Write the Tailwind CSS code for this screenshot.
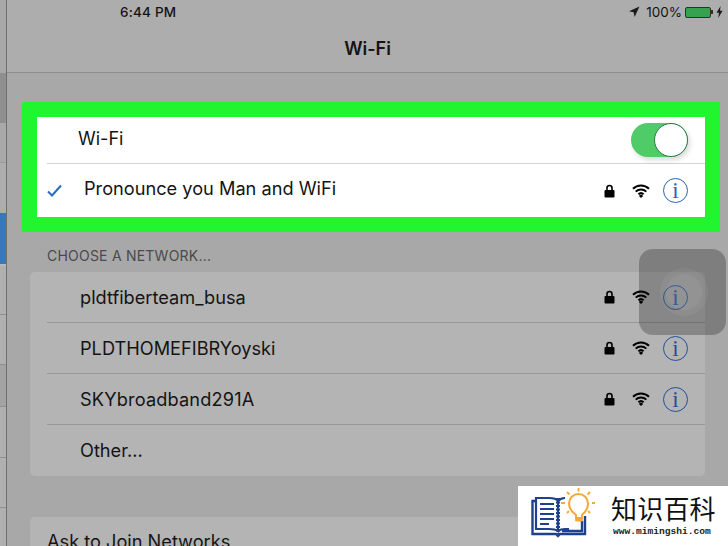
<!DOCTYPE html>
<html>
<head>
<meta charset="utf-8">
<script src="https://cdn.jsdelivr.net/npm/@tailwindcss/browser@4"></script>
</head>
<body class="m-0">
<div class="relative flex w-[728px] h-[546px] overflow-hidden bg-[#a8a8a9] font-['Inter','Liberation_Sans',sans-serif] text-[#141414]">
  <!-- sidebar sliver -->
  <div class="flex flex-col w-[7px] shrink-0 border-r border-[#6f6f6f] bg-[#b0b0b0]">
    <div class="h-[73px] bg-[#a8a8a8]"></div>
    <div class="h-[50px] bg-[#8f8f8f]"></div>
    <div class="h-[40px] bg-[#a9a9a9] border-b border-[#9c9c9c]"></div>
    <div class="h-[50px] bg-[#adadad]"></div>
    <div class="h-[51px] bg-[#3a76bd]"></div>
    <div class="h-[51px] border-t-2 border-[#b9b9b9] border-b border-b-[#8f8f8f]"></div>
    <div class="h-[50px] border-b border-[#8f8f8f]"></div>
    <div class="h-[42px] bg-[#a3a3a3] border-b border-[#8f8f8f]"></div>
    <div class="h-[51px] border-b border-[#8f8f8f]"></div>
    <div class="h-[50px] border-b border-[#8f8f8f]"></div>
  </div>

  <div class="flex-1 flex flex-col min-w-0">
    <!-- header -->
    <div class="h-[73px] shrink-0 bg-[#adadad] border-b border-[#8d8d8d] flex flex-col">
      <div class="h-[24px] flex items-center justify-between pl-[113px] pr-[5px]">
        <span class="text-[13.5px] font-medium tracking-[0.2px]">6:44 PM</span>
        <div class="flex items-center">
          <svg width="12" height="12" viewBox="0 0 12 12" class="mr-[6px]"><path d="M11.5 .5 L1 5.2 L5.6 6.2 L6.6 11 Z" fill="#1a1a1a"/></svg>
          <span class="text-[13.5px] mr-[3px]">100%</span>
          <div class="w-[26px] h-[11px] border border-[#2f2f2f] bg-[#35a24f] rounded-[2px]"></div>
          <div class="w-[2px] h-[4px] bg-[#333] mr-[3px]"></div>
          <svg width="7" height="12" viewBox="0 0 7 12"><path d="M4.6 0 L0.5 6.8 H3 L2.2 12 L6.6 4.8 H4 Z" fill="#1a1a1a"/></svg>
        </div>
      </div>
      <div class="h-[48px] flex items-center justify-center">
        <span class="text-[18px] font-semibold">Wi-Fi</span>
      </div>
    </div>

    <!-- highlighted group -->
    <div class="shrink-0 mt-[29px] ml-[15px] mr-[8px] border-[15px] border-[#21f52f] bg-white">
      <div class="h-[46px] flex items-center justify-between pl-[41px] pr-[17px]">
        <span class="text-[18px] mb-[3px]">Wi-Fi</span>
        <div class="relative w-[57px] h-[34px] mb-[1px] rounded-full bg-[#4fcb68] shadow-[2px_3px_5px_rgba(0,0,0,0.15)]">
          <div class="absolute right-0 top-0 w-[34px] h-[34px] rounded-full bg-white border border-[#2f7a45]"></div>
        </div>
      </div>
      <div class="ml-[10px] h-[1px] bg-[#d4d4d4]"></div>
      <div class="h-[53px] flex items-center pl-[10px] pr-[17px]">
        <svg width="15" height="13" viewBox="0 0 15 13"><path d="M1 7.5 L5 11.5 L14 1.5" fill="none" stroke="#2a6cc0" stroke-width="2"/></svg>
        <span class="ml-[22px] text-[18.2px] mb-[3px] flex-1">Pronounce you Man and WiFi</span>
        <svg width="11" height="14" viewBox="0 0 11 14"><path d="M3 6.5 V4 a2.5 2.5 0 0 1 5 0 V6.5" fill="none" stroke="#000" stroke-width="1.6"/><rect x="0.5" y="6" width="10" height="7.5" rx="1" fill="#000"/></svg>
        <svg class="ml-[17px]" width="18" height="14" viewBox="0 0 18 14"><path d="M1 4.8 a11.5 11.5 0 0 1 16 0 M3.7 7.6 a7.6 7.6 0 0 1 10.6 0 M6.4 10.3 a3.8 3.8 0 0 1 5.2 0" fill="none" stroke="#000" stroke-width="2"/><path d="M9 14 L6.9 11.9 a3 3 0 0 1 4.2 0 Z" fill="#000"/></svg>
        <div class="ml-[13px] w-[25px] h-[25px] rounded-full border-[1.4px] border-[#2a62b8] flex items-center justify-center font-['Liberation_Serif',serif] text-[23px] leading-none text-[#2a62b8]">i</div>
      </div>
    </div>

    <div class="shrink-0 h-[40px] pl-[40px] flex items-end pb-[6px] text-[14px] tracking-[0.22px] text-[#4a4a4a]">CHOOSE A NETWORK...</div>

    <!-- networks -->
    <div class="shrink-0 ml-[23px] mr-[23px] bg-[#b4b4b4] rounded-[5px] h-[204px] flex flex-col">
      <div class="h-[51px] ml-[17px] pl-[33px] pr-[17px] flex items-center border-b border-[#989898]">
        <span class="text-[18.2px] flex-1 mt-[1px]">pldtfiberteam_busa</span>
        <svg width="11" height="14" viewBox="0 0 11 14"><path d="M3 6.5 V4 a2.5 2.5 0 0 1 5 0 V6.5" fill="none" stroke="#000" stroke-width="1.6"/><rect x="0.5" y="6" width="10" height="7.5" rx="1" fill="#000"/></svg>
        <svg class="ml-[17px]" width="18" height="14" viewBox="0 0 18 14"><path d="M1 4.8 a11.5 11.5 0 0 1 16 0 M3.7 7.6 a7.6 7.6 0 0 1 10.6 0 M6.4 10.3 a3.8 3.8 0 0 1 5.2 0" fill="none" stroke="#000" stroke-width="2"/><path d="M9 14 L6.9 11.9 a3 3 0 0 1 4.2 0 Z" fill="#000"/></svg>
        <div class="ml-[13px] w-[25px] h-[25px] rounded-full border-[1.4px] border-[#2a62b8] flex items-center justify-center font-['Liberation_Serif',serif] text-[23px] leading-none text-[#2a62b8]">i</div>
      </div>
      <div class="h-[51px] ml-[17px] pl-[33px] pr-[17px] flex items-center border-b border-[#989898]">
        <span class="text-[18.2px] flex-1 mt-[1px]">PLDTHOMEFIBRYoyski</span>
        <svg width="11" height="14" viewBox="0 0 11 14"><path d="M3 6.5 V4 a2.5 2.5 0 0 1 5 0 V6.5" fill="none" stroke="#000" stroke-width="1.6"/><rect x="0.5" y="6" width="10" height="7.5" rx="1" fill="#000"/></svg>
        <svg class="ml-[17px]" width="18" height="14" viewBox="0 0 18 14"><path d="M1 4.8 a11.5 11.5 0 0 1 16 0 M3.7 7.6 a7.6 7.6 0 0 1 10.6 0 M6.4 10.3 a3.8 3.8 0 0 1 5.2 0" fill="none" stroke="#000" stroke-width="2"/><path d="M9 14 L6.9 11.9 a3 3 0 0 1 4.2 0 Z" fill="#000"/></svg>
        <div class="ml-[13px] w-[25px] h-[25px] rounded-full border-[1.4px] border-[#1f4f9c] flex items-center justify-center font-['Liberation_Serif',serif] text-[23px] leading-none text-[#1f4f9c]">i</div>
      </div>
      <div class="h-[51px] ml-[17px] pl-[33px] pr-[17px] flex items-center border-b border-[#989898]">
        <span class="text-[18.2px] tracking-[0.15px] flex-1 mt-[1px]">SKYbroadband291A</span>
        <svg width="11" height="14" viewBox="0 0 11 14"><path d="M3 6.5 V4 a2.5 2.5 0 0 1 5 0 V6.5" fill="none" stroke="#000" stroke-width="1.6"/><rect x="0.5" y="6" width="10" height="7.5" rx="1" fill="#000"/></svg>
        <svg class="ml-[17px]" width="18" height="14" viewBox="0 0 18 14"><path d="M1 4.8 a11.5 11.5 0 0 1 16 0 M3.7 7.6 a7.6 7.6 0 0 1 10.6 0 M6.4 10.3 a3.8 3.8 0 0 1 5.2 0" fill="none" stroke="#000" stroke-width="2"/><path d="M9 14 L6.9 11.9 a3 3 0 0 1 4.2 0 Z" fill="#000"/></svg>
        <div class="ml-[13px] w-[25px] h-[25px] rounded-full border-[1.4px] border-[#1f4f9c] flex items-center justify-center font-['Liberation_Serif',serif] text-[23px] leading-none text-[#1f4f9c]">i</div>
      </div>
      <div class="h-[51px] ml-[17px] pl-[33px] flex items-center">
        <span class="text-[18.2px] mt-[1px]">Other...</span>
      </div>
    </div>

    <!-- ask to join -->
    <div class="shrink-0 mt-[41px] ml-[23px] mr-[23px] bg-[#b4b4b4] rounded-[5px] h-[51px] pl-[17px] pt-[11px]">
      <span class="text-[18.2px]">Ask to Join Networks</span>
    </div>
  </div>

  <!-- AssistiveTouch overlay -->
  <div class="absolute left-[639px] top-[249px] w-[87px] h-[86px] rounded-[14px] bg-black/25 flex items-center justify-center">
    <div class="ml-[2px] w-[48px] h-[48px] rounded-full bg-white/5 flex items-center justify-center">
      <div class="w-[36px] h-[36px] rounded-full bg-white/5"></div>
    </div>
  </div>

  <!-- watermark logo -->
  <div class="absolute left-[518px] top-[486px] w-[210px] h-[60px] bg-white flex items-center">
    <svg class="ml-[13px] -mt-[7px]" width="64" height="50" viewBox="0 0 64 50">
      <path d="M4 13 H1.5 V46 H25 L27 48 L29 46 H54 V28 M51 33 V43 H31" fill="none" stroke="#1f3f8f" stroke-width="2.4"/>
      <path d="M5 10 H18 Q25 10 27 13 V43 Q24 41 18 41 H5 Z" fill="none" stroke="#1f3f8f" stroke-width="2.2"/>
      <path d="M27 13 Q30 10 34 10 M27 43 Q30 41 34 41 H38" fill="none" stroke="#1f3f8f" stroke-width="2.2"/>
      <path d="M27 10 V46" stroke="#1f3f8f" stroke-width="4" stroke-dasharray="2 1.5"/>
      <path d="M9 16 H23 M9 21 H23 M9 26 H23 M9 31 H23 M9 36 H18" stroke="#1f3f8f" stroke-width="2.2"/>
      <path d="M45 30 V27 Q38 22 38 15.5 A9.5 9.5 0 0 1 57 15.5 Q57 22 51 27 V30 Z" fill="#fff" stroke="#f5a83a" stroke-width="2"/>
      <path d="M45.5 32 H50.5" stroke="#f5a83a" stroke-width="3" stroke-linecap="round"/>
      <path d="M47.5 0 V3.5 M36 4 L38.5 6.5 M59 4 L56.5 6.5 M30 15 H34 M61 15 H64 M36 25 L38 23 M59 25 L57 23" stroke="#f5a83a" stroke-width="1.8"/>
    </svg>
    <div class="ml-[16px] flex flex-col gap-[5px]">
      <span class="font-['Noto_Sans_CJK_SC',sans-serif] text-[26px] leading-[26px] text-[#111] tracking-[0.2px]">知识百科</span>
      <span class="font-['Liberation_Mono',monospace] font-bold text-[9.6px] leading-[12px] text-[#222] ml-[2px]">www.mimingshi.com</span>
    </div>
  </div>
</div>
</body>
</html>
